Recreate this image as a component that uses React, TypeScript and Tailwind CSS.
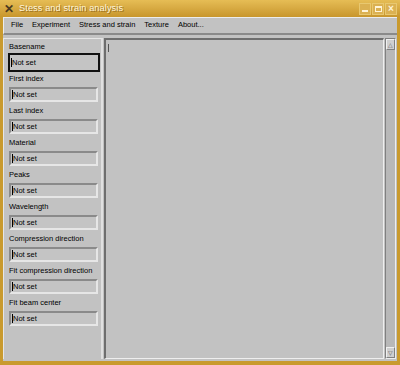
import React from "react";

const fields = [
  "Basename",
  "First index",
  "Last index",
  "Material",
  "Peaks",
  "Wavelength",
  "Compression direction",
  "Fit compression direction",
  "Fit beam center",
];

function Field({ label, focused }: { label: string; focused?: boolean }) {
  return (
    <div className="flex flex-col">
      <div className="h-[12px] pl-[5px] leading-[12px] text-[7.5px] text-black">{label}</div>
      <div
        className={
          focused
            ? "ml-[4px] mr-[1px] mt-0 mb-[1px] h-[19px] border-2 border-[#111] bg-[#c4c4c4] flex items-center"
            : "ml-[5px] mr-[3px] mt-[2px] mb-[3px] h-[15px] border-2 border-t-[#8a8a8a] border-l-[#8a8a8a] border-b-[#e6e6e6] border-r-[#e6e6e6] bg-[#c4c4c4] flex items-center"
        }
      >
        <span className="ml-[1px] w-px h-[9px] bg-black" />
        <span className="text-[7.5px] text-black leading-none">Not set</span>
      </div>
    </div>
  );
}

export default function App() {
  return (
    <div
      className="w-[400px] h-[365px] bg-[#c99a2e] flex flex-col overflow-hidden"
      style={{ fontFamily: '"Liberation Sans", Arial, sans-serif' }}
    >
      {/* Title bar */}
      <div className="h-[17px] bg-gradient-to-b from-[#e6bd55] to-[#c8962c] flex items-center relative">
        <span className="ml-[4px] text-[12px] font-bold text-[#4a3a20] leading-none">✕</span>
        <span className="ml-[5px] text-[9.2px] text-[#fff6dc] tracking-[0.1px] [text-shadow:1px_1px_0_#9a7020]">
          Stess and strain analysis
        </span>
        <div className="ml-auto mr-[3px] flex gap-[1px]">
          <div className="w-[12px] h-[12px] bg-[#dbb152] border border-[#e8c870] flex items-end justify-center">
            <div className="w-[6px] h-[2px] bg-[#fff4d8] mb-[2px]" />
          </div>
          <div className="w-[12px] h-[12px] bg-[#dbb152] border border-[#e8c870] flex items-center justify-center">
            <div className="w-[7px] h-[6px] border border-[#fff4d8] border-t-2" />
          </div>
          <div className="w-[12px] h-[12px] bg-[#dbb152] border border-[#e8c870] flex items-center justify-center text-[10px] font-bold text-[#fff4d8] leading-none">
            ×
          </div>
        </div>
      </div>

      {/* Window body */}
      <div className="flex-1 mx-[3px] mb-[4px] bg-[#c2c2c2] flex flex-col">
        {/* Menu bar */}
        <div className="h-[18px] border-t border-l border-[#ececec] border-b-2 border-b-[#8a8a8a] flex items-center gap-[9px] pl-[7px] pb-[2px] text-[7.5px] text-black">
          <span>File</span>
          <span>Experiment</span>
          <span>Stress and strain</span>
          <span>Texture</span>
          <span>About...</span>
        </div>

        <div className="flex-1 flex pt-[3px] pb-[2px]">
          {/* Left panel */}
          <div className="w-[100px] border-t border-l border-[#e6e6e6] border-r-2 border-r-[#e0e0e0] pt-[2px] flex flex-col">
            {fields.map((f, i) => (
              <Field key={f} label={f} focused={i === 0} />
            ))}
          </div>

          {/* Text area */}
          <div className="flex-1 ml-[1px] border-t-2 border-l-2 border-t-[#6e6e6e] border-l-[#6e6e6e] border-b border-r border-b-[#eeeeee] border-r-[#eeeeee] bg-[#c2c2c2] relative">
            <div className="absolute left-[2px] top-[4px] w-px h-[8px] bg-[#555]" />
          </div>

          {/* Scrollbar */}
          <div className="w-[11px] ml-[1px] mr-[1px] border-l border-t border-[#808080] border-r border-b border-r-[#eeeeee] border-b-[#eeeeee] bg-[#b8b8b8] flex flex-col justify-between">
            <div className="h-[11px] bg-[#cfcfcf] border border-[#f0f0f0] border-b-[#808080] border-r-[#808080] flex items-center justify-center text-[6px] leading-none text-[#555]">
              △
            </div>
            <div className="h-[11px] bg-[#cfcfcf] border border-[#f0f0f0] border-b-[#808080] border-r-[#808080] flex items-center justify-center text-[6px] leading-none text-[#555]">
              ▽
            </div>
          </div>
        </div>
      </div>
    </div>
  );
}
